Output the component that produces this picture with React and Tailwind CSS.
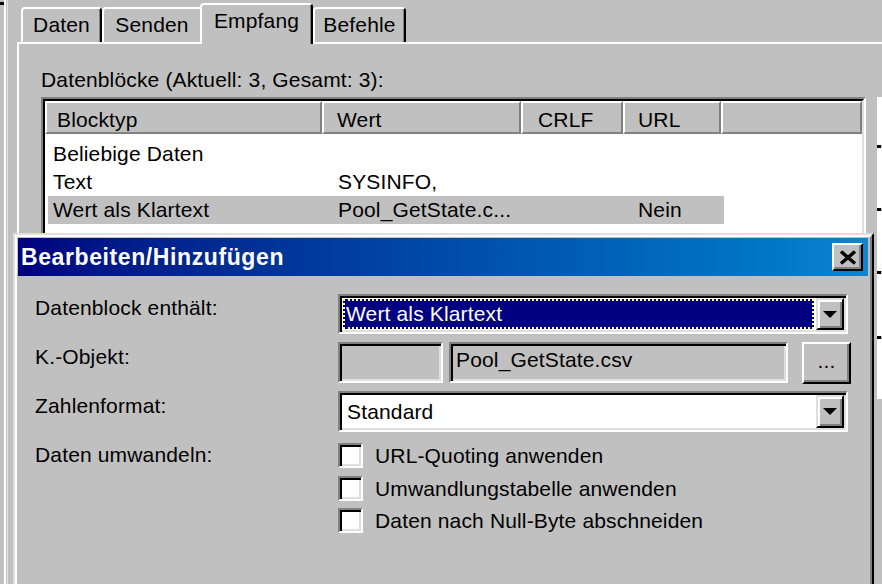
import React from "react";

// Classic 3D bevels, drawn at double size.
const sunken =
  "border-2 border-t-[#808080] border-l-[#808080] border-r-white border-b-white shadow-[inset_2px_2px_0_#000,inset_-2px_-2px_0_#dfdfdf]";
const raised =
  "border-2 border-t-white border-l-white border-r-black border-b-black shadow-[inset_-2px_-2px_0_#808080]";
const comboBtn =
  "border-2 border-t-[#dfdfdf] border-l-[#dfdfdf] border-r-black border-b-black shadow-[inset_2px_2px_0_#fff,inset_-2px_-2px_0_#808080]";
const headerCell =
  "h-full shrink-0 border-2 border-t-white border-l-white border-r-[#808080] border-b-[#808080] bg-[#c0c0c0] pt-[5px] leading-[24px]";

function DownArrow() {
  return (
    <svg width="14" height="7" viewBox="0 0 14 7">
      <path d="M0 0H14L7 7Z" fill="#000" />
    </svg>
  );
}

function CloseGlyph() {
  return (
    <svg width="18" height="15" viewBox="0 0 18 15">
      <path d="M2 1.5L16 13.5M16 1.5L2 13.5" stroke="#000" strokeWidth="3.4" />
    </svg>
  );
}

function ComboArrowButton() {
  return (
    <div className={`w-[28px] h-full shrink-0 bg-[#c0c0c0] flex items-center justify-center ${comboBtn}`}>
      <DownArrow />
    </div>
  );
}

function Checkbox({ label, h }) {
  return (
    <div className={`flex items-start ${h}`}>
      <div className={`w-[25px] h-[25px] shrink-0 bg-white ${sunken}`} />
      <span className="ml-[12px] leading-[25px] whitespace-nowrap">{label}</span>
    </div>
  );
}

const rows = [
  { typ: "Beliebige Daten", wert: "", url: "", sel: false },
  { typ: "Text", wert: "SYSINFO,", url: "", sel: false },
  { typ: "Wert als Klartext", wert: "Pool_GetState.c...", url: "Nein", sel: true },
];

const rightStrips = ["h-[48px]", "h-[60px]", "h-[60px]", "h-[62px]", "h-[60px]"];

export default function App() {
  return (
    <div className="relative w-[882px] h-[584px] overflow-hidden bg-[#c0c0c0] font-['Liberation_Sans',Arial,sans-serif] text-[21px] leading-[24px] tracking-[0.15px] text-black">
      <div className="flex h-full">
        {/* neighbouring frame edge on the far left */}
        <div className="w-[17px] shrink-0 flex">
          <div className="w-[4px] pt-[2px]">
            <div className="h-[3px] bg-black" />
          </div>
          <div className="w-[1.5px] bg-white" />
          <div className="w-[1px]" />
          <div className="w-[1.5px] bg-[#e4e4e4]" />
        </div>

        {/* tab control */}
        <div className="flex-1 min-w-0 flex flex-col">
          <div className="h-[42px] flex items-end pl-[4px]">
            <div className="w-[81px] h-[35px] shrink-0 flex justify-center pt-[4px] rounded-t-[4px] border-l-2 border-t-2 border-r-2 border-l-white border-t-white border-r-black shadow-[inset_-1px_0_0_#808080]">
              Daten
            </div>
            <div className="w-[98px] h-[35px] shrink-0 flex justify-center pt-[4px] rounded-tl-[4px] border-l-2 border-t-2 border-l-white border-t-white">
              Senden
            </div>
            <div className="relative z-10 w-[113px] h-[41px] -mb-[2px] shrink-0 flex justify-center pt-[4px] bg-[#c0c0c0] rounded-t-[4px] border-l-2 border-t-2 border-r-2 border-l-white border-t-white border-r-black shadow-[inset_-1px_0_0_#808080]">
              Empfang
            </div>
            <div className="w-[93px] h-[35px] shrink-0 flex justify-center pt-[4px] rounded-t-[4px] border-l-2 border-t-2 border-r-2 border-l-white border-t-white border-r-black shadow-[inset_-1px_0_0_#808080]">
              Befehle
            </div>
          </div>

          <div className="flex-1 border-t-2 border-l-2 border-t-white border-l-white pl-[22px] pt-[24px]">
            <div className="whitespace-nowrap">Datenblöcke (Aktuell: 3, Gesamt: 3):</div>
            <div className="flex items-start mt-[5px]">
              {/* list view */}
              <div className="w-[825px] h-[220px] shrink-0 border-2 border-t-[#808080] border-l-[#808080] border-r-white border-b-white">
                <div className="h-full bg-white border-2 border-t-black border-l-black border-r-[#dfdfdf] border-b-[#dfdfdf]">
                  <div className="flex h-[33px]">
                    <div className={`w-[277px] pl-[10px] ${headerCell}`}>Blocktyp</div>
                    <div className={`w-[199px] pl-[13px] ${headerCell}`}>Wert</div>
                    <div className={`w-[102px] pl-[15px] ${headerCell}`}>CRLF</div>
                    <div className={`w-[98px] pl-[13px] ${headerCell}`}>URL</div>
                    <div className={`w-[141px] ${headerCell}`} />
                  </div>
                  <div className="pt-[6px] pl-[3px]">
                    {rows.map((r) => (
                      <div
                        key={r.typ}
                        className={`flex w-[676px] h-[28px] leading-[28px] whitespace-nowrap ${r.sel ? "bg-[#c0c0c0]" : ""}`}
                      >
                        <span className="w-[290px] shrink-0 pl-[5px]">{r.typ}</span>
                        <span className="w-[300px] shrink-0">{r.wert}</span>
                        <span>{r.url}</span>
                      </div>
                    ))}
                  </div>
                </div>
              </div>

              {/* edges of the button column to the right */}
              <div className="ml-[11px] w-[10px] shrink-0 flex flex-col">
                {rightStrips.map((h, i) => (
                  <React.Fragment key={i}>
                    <div className={`${h} bg-white`} />
                    {i < rightStrips.length - 1 && (
                      <div className="h-[3px] flex">
                        <div className="w-[4px] bg-black" />
                      </div>
                    )}
                  </React.Fragment>
                ))}
              </div>
            </div>
          </div>
        </div>
      </div>

      {/* Bearbeiten/Hinzufügen window */}
      <div className="absolute left-[13px] top-[233px] w-[861px] h-[400px] bg-[#c0c0c0] border-2 border-t-[#dfdfdf] border-l-[#dfdfdf] border-r-black border-b-black">
        <div className="h-full border-2 border-t-white border-l-white border-r-[#808080] border-b-[#808080] pl-[1px] pt-[1px] pr-[2px]">
          <div className="h-[38px] flex items-center justify-between bg-linear-to-r from-[#000080] to-[#1084d0] pl-[3px] pr-[5px]">
            <span className="text-white font-bold text-[23px] tracking-[0.6px] leading-[38px] whitespace-nowrap">
              Bearbeiten/Hinzufügen
            </span>
            <div className={`w-[31px] h-[28px] bg-[#c0c0c0] flex items-center justify-center ${raised}`}>
              <CloseGlyph />
            </div>
          </div>

          <div className="pl-[17px] pt-[18px] flex flex-col">
            <div className="flex items-start h-[40px]">
              <div className="w-[303px] shrink-0 pt-[2px] whitespace-nowrap">Datenblock enthält:</div>
              <div className={`w-[510px] h-[40px] shrink-0 bg-white flex p-[2px] ${sunken}`}>
                <div className="flex-1 flex items-center ml-[1px] mr-[2px] my-[1px] bg-[#000080] border-2 border-dotted border-[#ffff80] text-white pl-[1px] whitespace-nowrap">
                  Wert als Klartext
                </div>
                <ComboArrowButton />
              </div>
            </div>

            <div className="flex items-start h-[41px] mt-[8px]">
              <div className="w-[303px] shrink-0 pt-[3px] whitespace-nowrap">K.-Objekt:</div>
              <div className={`w-[105px] h-[41px] shrink-0 bg-[#c0c0c0] ${sunken}`} />
              <div className={`ml-[6px] w-[339px] h-[41px] shrink-0 bg-[#c0c0c0] pl-[5px] pt-[4px] whitespace-nowrap ${sunken}`}>
                Pool_GetState.csv
              </div>
              <div className={`ml-[14px] w-[49px] h-[42px] shrink-0 bg-[#c0c0c0] flex items-center justify-center pb-[4px] ${raised}`}>
                ...
              </div>
            </div>

            <div className="flex items-start h-[41px] mt-[8px]">
              <div className="w-[303px] shrink-0 pt-[3px] whitespace-nowrap">Zahlenformat:</div>
              <div className={`w-[510px] h-[41px] shrink-0 bg-white flex p-[2px] ${sunken}`}>
                <div className="flex-1 flex items-center pl-[5px] whitespace-nowrap">Standard</div>
                <ComboArrowButton />
              </div>
            </div>

            <div className="flex items-start mt-[11px]">
              <div className="w-[303px] shrink-0 whitespace-nowrap">Daten umwandeln:</div>
              <div className="flex flex-col">
                <Checkbox label="URL-Quoting anwenden" h="h-[33px]" />
                <Checkbox label="Umwandlungstabelle anwenden" h="h-[32px]" />
                <Checkbox label="Daten nach Null-Byte abschneiden" h="h-[32px]" />
              </div>
            </div>
          </div>
        </div>
      </div>
    </div>
  );
}
